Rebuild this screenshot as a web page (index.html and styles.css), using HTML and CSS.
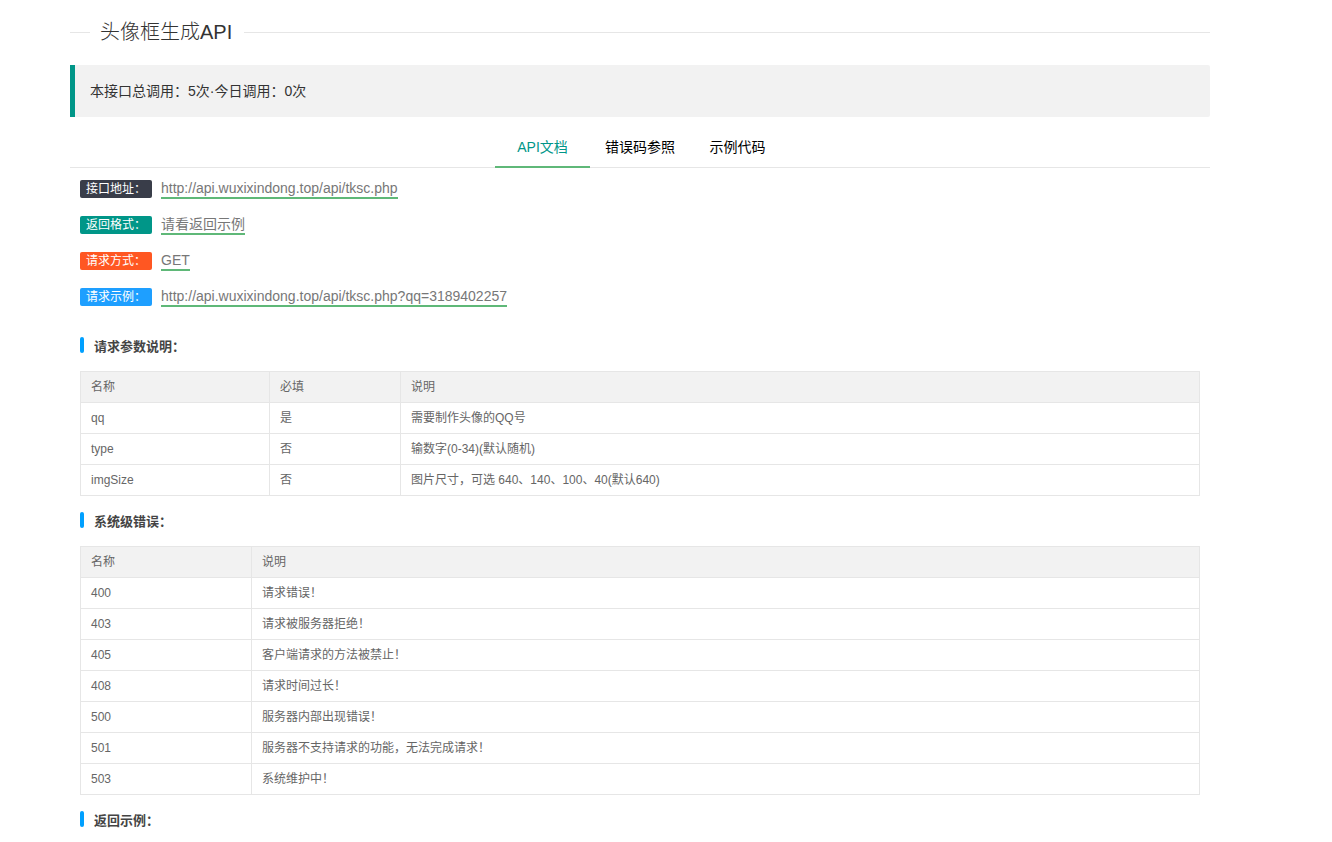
FILE: index.html
```html
<!DOCTYPE html>
<html lang="zh-CN">
<head>
<meta charset="utf-8">
<title>头像框生成API</title>
<link rel="stylesheet" href="styles.css">
</head>
<body>
<div class="page">
  <div class="field-title">
    <span class="rule short"></span>
    <h1 class="legend">头像框生成API</h1>
    <span class="rule"></span>
  </div>

  <blockquote class="quote">本接口总调用：5次·今日调用：0次</blockquote>

  <div class="tab">
    <ul class="tab-title">
      <li class="active">API文档</li>
      <li>错误码参照</li>
      <li>示例代码</li>
    </ul>
    <div class="tab-content">
      <div class="info-row"><span class="badge badge-black">接口地址：</span><span class="link">http://api.wuxixindong.top/api/tksc.php</span></div>
      <div class="info-row"><span class="badge badge-teal">返回格式：</span><span class="link">请看返回示例</span></div>
      <div class="info-row"><span class="badge badge-orange">请求方式：</span><span class="link">GET</span></div>
      <div class="info-row"><span class="badge badge-blue">请求示例：</span><span class="link">http://api.wuxixindong.top/api/tksc.php?qq=3189402257</span></div>

      <h3 class="sec-title first">请求参数说明：</h3>
      <table class="data-table">
        <colgroup><col class="c-name"><col class="c-req"><col></colgroup>
        <thead><tr><th>名称</th><th>必填</th><th>说明</th></tr></thead>
        <tbody>
          <tr><td>qq</td><td>是</td><td>需要制作头像的QQ号</td></tr>
          <tr><td>type</td><td>否</td><td>输数字(0-34)(默认随机)</td></tr>
          <tr><td>imgSize</td><td>否</td><td>图片尺寸，可选 640、140、100、40(默认640)</td></tr>
        </tbody>
      </table>

      <h3 class="sec-title">系统级错误：</h3>
      <table class="data-table">
        <colgroup><col class="c-code"><col></colgroup>
        <thead><tr><th>名称</th><th>说明</th></tr></thead>
        <tbody>
          <tr><td>400</td><td>请求错误！</td></tr>
          <tr><td>403</td><td>请求被服务器拒绝！</td></tr>
          <tr><td>405</td><td>客户端请求的方法被禁止！</td></tr>
          <tr><td>408</td><td>请求时间过长！</td></tr>
          <tr><td>500</td><td>服务器内部出现错误！</td></tr>
          <tr><td>501</td><td>服务器不支持请求的功能，无法完成请求！</td></tr>
          <tr><td>503</td><td>系统维护中！</td></tr>
        </tbody>
      </table>

      <h3 class="sec-title">返回示例：</h3>
    </div>
  </div>
</div>
</body>
</html>
```

FILE: styles.css
```css
* { box-sizing: border-box; }

html, body {
  margin: 0;
  padding: 0;
  background: #fff;
}

body {
  font-family: "Liberation Sans", Arial, "Noto Sans CJK SC", sans-serif;
  color: #333;
  font-size: 14px;
}

.page {
  width: 1140px;
  margin-left: 70px;
}

/* page title with rules on both sides */
.field-title {
  display: flex;
  align-items: center;
  height: 30px;
  margin-top: 17px;
}

.rule {
  flex: 1;
  height: 1px;
  background: #e6e6e6;
}

.rule.short {
  flex: 0 0 20px;
}

.legend {
  margin: 0 12px 0 10px;
  font-size: 20px;
  font-weight: 300;
  line-height: 30px;
  color: #333;
}

/* statistics quote */
.quote {
  margin: 18px 0 10px;
  padding: 15px;
  line-height: 22px;
  border-left: 5px solid #009688;
  border-radius: 0 2px 2px 0;
  background: #f2f2f2;
  color: #333;
  font-size: 14px;
}

/* tabs */
.tab-title {
  display: flex;
  justify-content: center;
  margin: 0;
  padding: 0;
  list-style: none;
  height: 41px;
  border-bottom: 1px solid #e6e6e6;
}

.tab-title li {
  position: relative;
  min-width: 95px;
  padding: 0 15px;
  height: 40px;
  line-height: 40px;
  text-align: center;
  font-size: 14px;
  color: #000;
  cursor: pointer;
}

.tab-title li.active {
  color: #009688;
}

.tab-title li.active::after {
  content: "";
  position: absolute;
  left: 0;
  right: 0;
  bottom: -1px;
  height: 2px;
  background: #5fb878;
}

.tab-content {
  padding: 3px 10px 0;
}

/* interface info rows */
.info-row {
  display: flex;
  align-items: center;
  height: 36px;
}

.badge {
  display: inline-block;
  height: 18px;
  line-height: 18px;
  padding: 0 6px;
  font-size: 12px;
  color: #fff;
  border-radius: 2px;
  margin-right: 9px;
}

.badge-black { background: #393d49; }
.badge-teal { background: #009688; }
.badge-orange { background: #ff5722; }
.badge-blue { background: #1e9fff; }

.link {
  display: inline-block;
  line-height: 17px;
  font-size: 14px;
  color: #777;
  border-bottom: 2px solid #5fb878;
  margin-top: 1px;
}

/* section headings */
.sec-title {
  display: flex;
  align-items: center;
  height: 20px;
  margin: 14px 0 16px;
  font-size: 13px;
  font-weight: bold;
  color: #444;
}

.sec-title.first {
  margin-top: 20px;
}

.sec-title::before {
  content: "";
  width: 4px;
  height: 16px;
  border-radius: 2px;
  background: #00a0ff;
  margin-right: 10px;
}

/* tables */
.data-table {
  width: 100%;
  border-collapse: collapse;
  table-layout: fixed;
  font-size: 12px;
  color: #666;
}

.data-table th,
.data-table td {
  height: 31px;
  padding: 0 10px;
  border: 1px solid #e6e6e6;
  text-align: left;
  font-weight: normal;
  line-height: 20px;
}

.data-table thead th {
  background: #f2f2f2;
}

.c-name { width: 189px; }
.c-req { width: 131px; }
.c-code { width: 171px; }
```
